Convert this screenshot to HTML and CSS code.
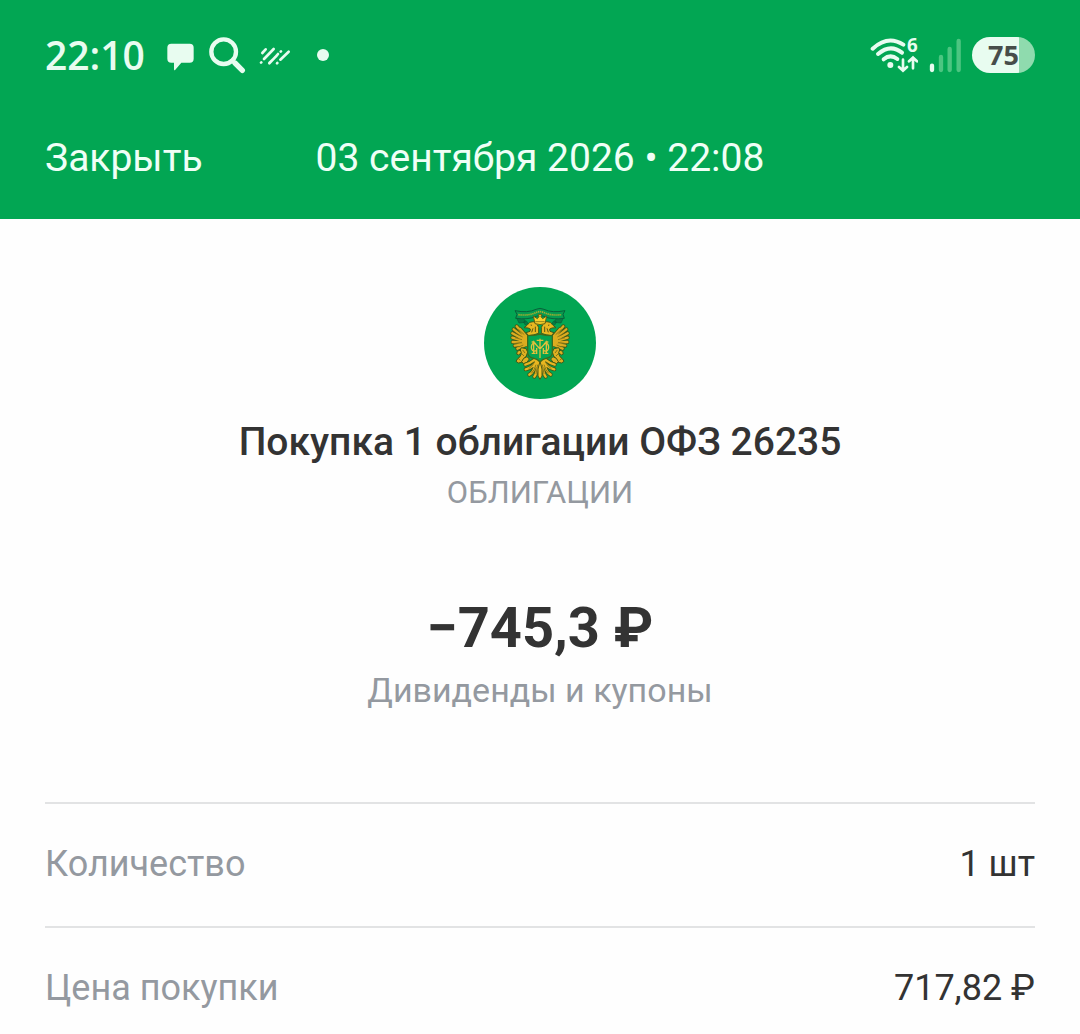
FILE: index.html
```
<!DOCTYPE html>
<html lang="ru">
<head>
    <meta charset="UTF-8">
    <meta name="viewport" content="width=device-width, initial-scale=1.0">
    <title>Покупка облигации</title>
    <link rel="stylesheet" href="styles.css">
</head>
<body>
    <header class="header">
        <div class="status-bar">
            <div class="status-left">
                <span class="time">22:10</span>
                <svg width="36" height="40" viewBox="384 45 108 120" aria-hidden="true">
                    <path fill="#e8fcf0" d="M424 71h55q12 0 12 12v33q0 12-12 12h-25l-18 21q-4 4-4-2v-19h-8q-12 0-12-12V83q0-12 12-12z"/>
                </svg>
                <svg width="39" height="40" viewBox="531 45 117 120" aria-hidden="true">
                    <g fill="none" stroke="#e8fcf0" stroke-linecap="round">
                        <circle cx="581" cy="95" r="37" stroke-width="13"/>
                        <path stroke-width="11" d="M606 121l8 8"/>
                        <path stroke-width="16" d="M615 129l22 22"/>
                    </g>
                </svg>
                <svg width="33" height="40" viewBox="687 45 99 120" aria-hidden="true">
                    <g fill="none" stroke="#e8fcf0" stroke-width="8" stroke-linecap="round">
                        <path d="M697 99l10-11M693 128l1-1M702 117l29-30M718 129l11-11M738 109l6-7M752 95l1-1M718 130l19-20M741 130l1-1M751 119l25-24"/>
                    </g>
                </svg>
                <svg width="25" height="40" viewBox="825 45 75 120" aria-hidden="true">
                    <circle cx="879" cy="105" r="18" fill="#e8fcf0"/>
                </svg>
            </div>
            <div class="status-right">
                <svg width="48" height="60" viewBox="30 15 144 180" aria-hidden="true">
                    <g fill="none" stroke="#e8fcf0" stroke-width="12" stroke-linecap="round">
                        <path d="M38 86Q84 44 130 74"/>
                        <path d="M54 102Q91 70 126 98"/>
                        <path d="M71 118Q91 101 112 117"/>
                        <path stroke-width="8" d="M129 119v32M117 141l12 11 12-11M159 145v-32M147 124l12-11 12 11"/>
                    </g>
                    <circle cx="91" cy="135" r="9" fill="#e8fcf0"/>
                    <text class="wifi-gen" x="141" y="97">6</text>
                </svg>
                <svg width="32" height="40" viewBox="207 45 96 120" aria-hidden="true">
                    <g stroke-width="13" stroke-linecap="round">
                        <path stroke="#e8fcf0" d="M216 137v13"/>
                        <path stroke="#4cc581" d="M243 111v39M269 87v63M296 63v87"/>
                    </g>
                </svg>
                <div class="battery"><span class="battery-level">75</span></div>
            </div>
        </div>
        <nav class="nav">
            <button type="button" class="close-btn">Закрыть</button>
            <div class="nav-title">03 сентября 2026 • 22:08</div>
        </nav>
    </header>

    <main class="content">
        <section class="summary">
            <svg class="emblem" viewBox="12 21 336 336" aria-hidden="true">
                <defs>
                    <path id="feathers" d="M138 172L110 139M136 176L101 148M134 180L97 160M134 184L97 173M135 188L98 186M136 192L104 197M138 195L112 206M140 170L120 147"/>
                    <path id="tail" d="M172 238Q160 264 137 268M170 242Q162 278 148 284M175 242Q170 284 163 290M166 238Q150 250 136 254"/>
                    <g id="half">
                        <use href="#feathers" stroke="#3f5a18" stroke-width="12" stroke-linecap="round"/>
                        <path fill="#e0ae20" d="M147 168l-18-6-4 14 4 18 18 8z"/>
                        <use href="#feathers" stroke="#dcac20" stroke-width="7" stroke-linecap="round"/>
                        <path fill="none" stroke="#6b6413" stroke-width="2" d="M133 164l-18-16M128 171l-24-14M126 179l-21-6M126 187l-20 3M130 195l-14 6"/>
                        <path fill="#e8b721" stroke="#3f5a18" stroke-width="3" stroke-linejoin="round" d="M176 160v-18l-6-11-10-6-11 2-8 9-9 7 12 1 7 3-1 7-12 4 8 9 14-2z"/>
                        <path fill="none" stroke="#5b5712" stroke-width="3" d="M152 135l4 1M159 145l-4 12M166 140v16"/>
                        <g fill="#deb021" stroke="#3f5a18" stroke-width="3" stroke-linejoin="round">
                            <path d="M124 203l14 3 5 10-4 12-8 9-6 10-10 2-7-5 5-8 7-6 4-9-5-8z"/>
                            <path d="M112 214l9-4 3 8-8 7-6-3zM131 235l10-5 7 7-8 11-10 3-5-6z"/>
                        </g>
                        <path fill="none" stroke="#5b5712" stroke-width="2" d="M128 210l7 9M125 221l7 7M114 235l7 6"/>
                        <g fill="none" stroke-linecap="round">
                            <use href="#tail" stroke="#3f5a18" stroke-width="12"/>
                            <use href="#tail" stroke="#e8b621" stroke-width="7"/>
                        </g>
                        <path fill="none" stroke="#5e5d13" stroke-width="2" d="M164 246q-8 14-18 20M168 254q-5 18-14 26M173 254l-5 28"/>
                        <path fill="#087d45" stroke="#075e36" stroke-width="2" d="M110 114l7 15 19-2-5-13zM130 126l6 9 8-5-6-8z"/>
                    </g>
                </defs>
                <circle cx="180" cy="189" r="168" fill="#02a653"/>
                <!-- left half of the eagle, then its mirror -->
                <use href="#half"/>
                <use href="#half" transform="translate(360 0) scale(-1 1)"/>
                <path fill="#079b50" stroke="#08623a" stroke-width="3" stroke-linejoin="round" d="M105 92q38 8 63-4l12-3 12 3q25 12 63 4l-6 11 4 12q-37 5-62-6l-11-3-11 3q-25 11-62 6l4-12z"/>
                <path fill="none" stroke="#a9ad2d" stroke-width="5" stroke-dasharray="4 2" d="M115 104q31 4 55-7 10-4 20 0 24 11 55 7"/>
                <path fill="#f8cf2c" stroke="#65600f" stroke-width="3" stroke-linejoin="round" d="M165 131l-5-23 12 8 5-6-2-7h10l-2 7 5 6 12-8-5 23q-15 5-30 0z"/>
                <path stroke="#65600f" stroke-width="2" d="M166 125h28"/>
                <!-- shield with the monogram -->
                <path fill="#05a451" stroke="#3f6a1c" stroke-width="4" d="M143 167q20 0 37-5 17 5 37 5v49q0 17-19 19-11 2-18 11-7-9-18-11-19-2-19-19z"/>
                <g fill="none" stroke="#dfc03c" stroke-width="4">
                    <path d="M180 176v58M170 181h20M161 220v-34l19 21 19-21v34M155 186h9M196 186h9M155 220h12M193 220h12"/>
                    <path d="M168 191c-10-4-14 3-14 11s5 14 14 10M192 191c10-4 14 3 14 11s-5 14-14 10M170 222v-18M190 222v-18"/>
                </g>
                <path fill="#f3c128" stroke="#4d5a14" stroke-width="3" d="M180 244q-9 24-6 44l6 10 6-10q3-20-6-44z"/>
            </svg>
            <h1 class="title">Покупка 1 облигации ОФЗ 26235</h1>
            <p class="category">ОБЛИГАЦИИ</p>
            <p class="amount">−745,3 ₽</p>
            <p class="note">Дивиденды и купоны</p>
        </section>

        <dl class="details">
            <div class="row">
                <dt>Количество</dt>
                <dd>1 шт</dd>
            </div>
            <div class="row">
                <dt>Цена покупки</dt>
                <dd>717,82 ₽</dd>
            </div>
        </dl>
    </main>
</body>
</html>
```
FILE: styles.css
```
* {
    box-sizing: border-box;
}
body {
    font-family: Roboto, sans-serif;
    background-color: #fefefe;
    color: #333;
    margin: 0;
}
svg {
    display: block;
    flex-shrink: 0;
}
.header {
    background-color: #02a653;
    color: #effff6;
    padding: 0 45px 37px;
}
.status-bar {
    display: flex;
    justify-content: space-between;
    align-items: center;
    height: 110px;
}
.status-left {
    display: flex;
    align-items: center;
    gap: 13px;
}
.status-right {
    display: flex;
    align-items: center;
    gap: 11px;
}
.time {
    font-family: "Open Sans", sans-serif;
    font-size: 39px;
    font-weight: 600;
    line-height: 48px;
    color: #e8fcf0;
}
.wifi-gen {
    font-family: "Open Sans", sans-serif;
    font-size: 56px;
    font-weight: 700;
    fill: #e8fcf0;
}
.battery {
    width: 63px;
    height: 36px;
    border-radius: 18px;
    background: linear-gradient(to right, #e8fcf0 75%, #8fdbae 75%);
    text-align: center;
}
.battery-level {
    font-family: "Open Sans", sans-serif;
    font-size: 27px;
    font-weight: 700;
    line-height: 36px;
    color: #474d4a;
}
.nav {
    display: grid;
    grid-template-columns: 1fr auto 1fr;
    align-items: center;
    padding-top: 24px;
    font-size: 39px;
    line-height: 48px;
}
.close-btn {
    justify-self: start;
    background: none;
    border: none;
    padding: 0;
    font: inherit;
    color: inherit;
    cursor: pointer;
}
.content {
    padding: 68px 45px 0;
}
.summary {
    display: flex;
    flex-direction: column;
    align-items: center;
    text-align: center;
}
.emblem {
    width: 112px;
    height: 112px;
}
.title {
    margin: 19px 0 0;
    font-size: 39px;
    font-weight: 500;
    line-height: 48px;
}
.category {
    margin: 7px 0 0;
    font-size: 31px;
    line-height: 40px;
    color: #9499a0;
}
.amount {
    margin: 83px 0 0;
    font-size: 56px;
    font-weight: 700;
    line-height: 64px;
}
.note {
    margin: 10px 0 0;
    font-size: 34px;
    line-height: 40px;
    color: #9499a0;
}
.details {
    margin: 92px 0 0;
}
.row {
    display: flex;
    justify-content: space-between;
    padding: 36px 0 38px;
    border-top: 2px solid #e2e3e4;
    font-size: 36px;
    line-height: 48px;
}
.row dt {
    color: #9499a0;
}
.row dd {
    margin: 0;
}
```
